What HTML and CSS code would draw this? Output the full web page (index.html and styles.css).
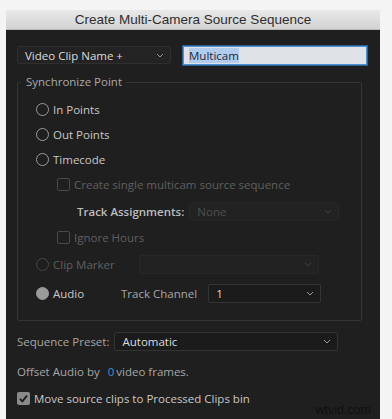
FILE: index.html
```html
<!DOCTYPE html>
<html lang="en">
  <head>
    <meta charset="UTF-8" />
    <title>Create Multi-Camera Source Sequence</title>
    <link rel="stylesheet" href="styles.css">
  </head>
  <body>
    <div class="dialog">
      <div class="titlebar">Create Multi-Camera Source Sequence</div>
      <div class="content">
        <div class="top-row">
          <div class="select name-select">
            <span>Video Clip Name +</span>
            <svg class="chev" width="8" height="5" viewBox="0 0 8 5"><path d="M1 1l3 3 3-3" fill="none" stroke="#9a9a9a" stroke-width="1"/></svg>
          </div>
          <div class="text-input"><span class="sel">Multicam</span></div>
        </div>

        <fieldset class="group">
          <legend>Synchronize Point</legend>

          <div class="row"><span class="radio"></span><span class="lbl">In Points</span></div>
          <div class="row"><span class="radio"></span><span class="lbl">Out Points</span></div>
          <div class="row"><span class="radio"></span><span class="lbl">Timecode</span></div>
          <div class="row sub"><span class="check"></span><span class="lbl dim">Create single multicam source sequence</span></div>
          <div class="row tall assign">
            <span class="lbl strong">Track Assignments:</span>
            <div class="select dim-select assign-select">
              <span>None</span>
              <svg class="chev" width="8" height="5" viewBox="0 0 8 5"><path d="M1 1l3 3 3-3" fill="none" stroke="#444" stroke-width="1"/></svg>
            </div>
          </div>
          <div class="row sub"><span class="check"></span><span class="lbl dim">Ignore Hours</span></div>
          <div class="row tall">
            <span class="radio off"></span><span class="lbl dim marker-lbl">Clip Marker</span>
            <div class="select dim-select marker-select">
              <span></span>
              <svg class="chev" width="8" height="5" viewBox="0 0 8 5"><path d="M1 1l3 3 3-3" fill="none" stroke="#444" stroke-width="1"/></svg>
            </div>
          </div>
          <div class="row audio-row">
            <span class="radio on"></span><span class="lbl audio-lbl">Audio</span>
            <span class="lbl soft">Track Channel</span>
            <div class="select dark-select channel-select">
              <span>1</span>
              <svg class="chev" width="8" height="5" viewBox="0 0 8 5"><path d="M1 1l3 3 3-3" fill="none" stroke="#9a9a9a" stroke-width="1"/></svg>
            </div>
          </div>
        </fieldset>

        <div class="preset-row">
          <span class="lbl soft">Sequence Preset:</span>
          <div class="select dark-select preset-select">
            <span>Automatic</span>
            <svg class="chev" width="8" height="5" viewBox="0 0 8 5"><path d="M1 1l3 3 3-3" fill="none" stroke="#9a9a9a" stroke-width="1"/></svg>
          </div>
        </div>

        <div class="offset-row">
          <span class="lbl soft">Offset Audio by</span>
          <span class="num">0</span>
          <span class="lbl soft">video frames.</span>
        </div>

        <div class="move-row">
          <span class="check checked">
            <svg width="13" height="13" viewBox="0 0 13 13"><path d="M3 6.8l2.4 2.6L10 3.6" fill="none" stroke="#1c1c1c" stroke-width="1.8"/></svg>
          </span>
          <span class="lbl">Move source clips to Processed Clips bin</span>
        </div>

        <div class="watermark">wtvid.com</div>
      </div>
    </div>
  </body>
</html>
```

FILE: styles.css
```css
* {
  box-sizing: border-box;
}
body {
  margin: 0;
  background: #f4f4f4;
  font-family: "Open Sans", "DejaVu Sans", sans-serif;
  font-size: 11.5px;
}

.dialog {
  margin: 10px 0 0 6px;
  width: 374px;
}

.titlebar {
  height: 20px;
  line-height: 20px;
  text-align: center;
  font-family: "Liberation Sans", Arial, sans-serif;
  font-size: 13.5px;
  color: #2e2e2e;
  background: linear-gradient(#e9e9e9, #d2d2d2);
  border-bottom: 1px solid #b8b8b8;
}

.content {
  position: relative;
  background: #1f1f1f;
  height: 389px;
  padding: 16px 0 0 11px;
}

.top-row {
  display: flex;
  align-items: flex-start;
  height: 19px;
}

.select {
  display: flex;
  align-items: center;
  justify-content: space-between;
  height: 19px;
  padding: 0 6px 0 7px;
  color: #dcdcdc;
  background: #232323;
  border: 1px solid #2f2f2f;
  border-radius: 2px;
}
.chev {
  flex: none;
}

.name-select {
  width: 154px;
  height: 18px;
}

.text-input {
  margin-left: 12px;
  width: 184px;
  height: 19px;
  padding: 0 5px;
  display: flex;
  align-items: center;
  background: #dfe3e8;
  border: 1px solid #4f91d3;
  box-shadow: 0 0 0 1px #2c5f8f;
}
.sel {
  background: #b1cced;
  color: #1b2a3a;
  line-height: 15px;
}

.group {
  margin: 10px 0 0 0;
  width: 345px;
  border: 1px solid #353535;
  border-radius: 2px;
  padding: 8px 0 12px 18px;
}
.group legend {
  margin-left: -15px;
  padding: 0 4px 0 5px;
  line-height: 14px;
  color: #a9a9a9;
}

.row {
  display: flex;
  align-items: center;
  height: 25px;
}
.row.tall {
  height: 28px;
}
.row.sub {
  padding-left: 21px;
}
.row.assign {
  padding-left: 41px;
}
.audio-row {
  height: 30px;
}

.lbl {
  color: #c8c8c8;
  white-space: nowrap;
}
.lbl.dim {
  color: #5f5f5f;
}
.lbl.strong {
  color: #bdbdbd;
  font-weight: 600;
}
.lbl.soft {
  color: #a6a6a6;
}

.radio {
  flex: none;
  width: 13px;
  height: 13px;
  margin-right: 4px;
  border: 1.5px solid #9b9b9b;
  border-radius: 50%;
}
.radio.off {
  border-color: #474747;
}
.radio.on {
  background: #9a9a9a;
  border-color: #9a9a9a;
}

.check {
  flex: none;
  width: 13px;
  height: 13px;
  margin-right: 4px;
  border: 1px solid #4a4a4a;
  border-radius: 2px;
}
.check.checked {
  border: none;
  background: #8a8a8a;
}
.check.checked svg {
  display: block;
}

.dim-select {
  color: #4f4f4f;
  background: #222;
  border-color: #272727;
}
.assign-select {
  margin-left: 5px;
  width: 150px;
}
.marker-lbl {
  width: 86px;
}
.marker-select {
  width: 180px;
}

.audio-lbl {
  width: 68px;
}
.dark-select {
  background: #1b1b1b;
  border-color: #343434;
}
.channel-select {
  margin-left: 11px;
  width: 113px;
}

.preset-row {
  display: flex;
  align-items: center;
  margin-top: 11px;
  height: 19px;
}
.preset-select {
  margin-left: 5px;
  width: 224px;
}

.offset-row {
  display: flex;
  align-items: center;
  margin-top: 11px;
  height: 18px;
}
.num {
  color: #3d90d6;
  margin: 0 2px 0 8px;
}

.move-row {
  display: flex;
  align-items: center;
  margin-top: 9px;
  height: 18px;
}

.watermark {
  position: absolute;
  right: 9px;
  bottom: 2px;
  font-family: "Liberation Sans", Arial, sans-serif;
  font-size: 12.5px;
  color: #0f0f0f;
}
```
